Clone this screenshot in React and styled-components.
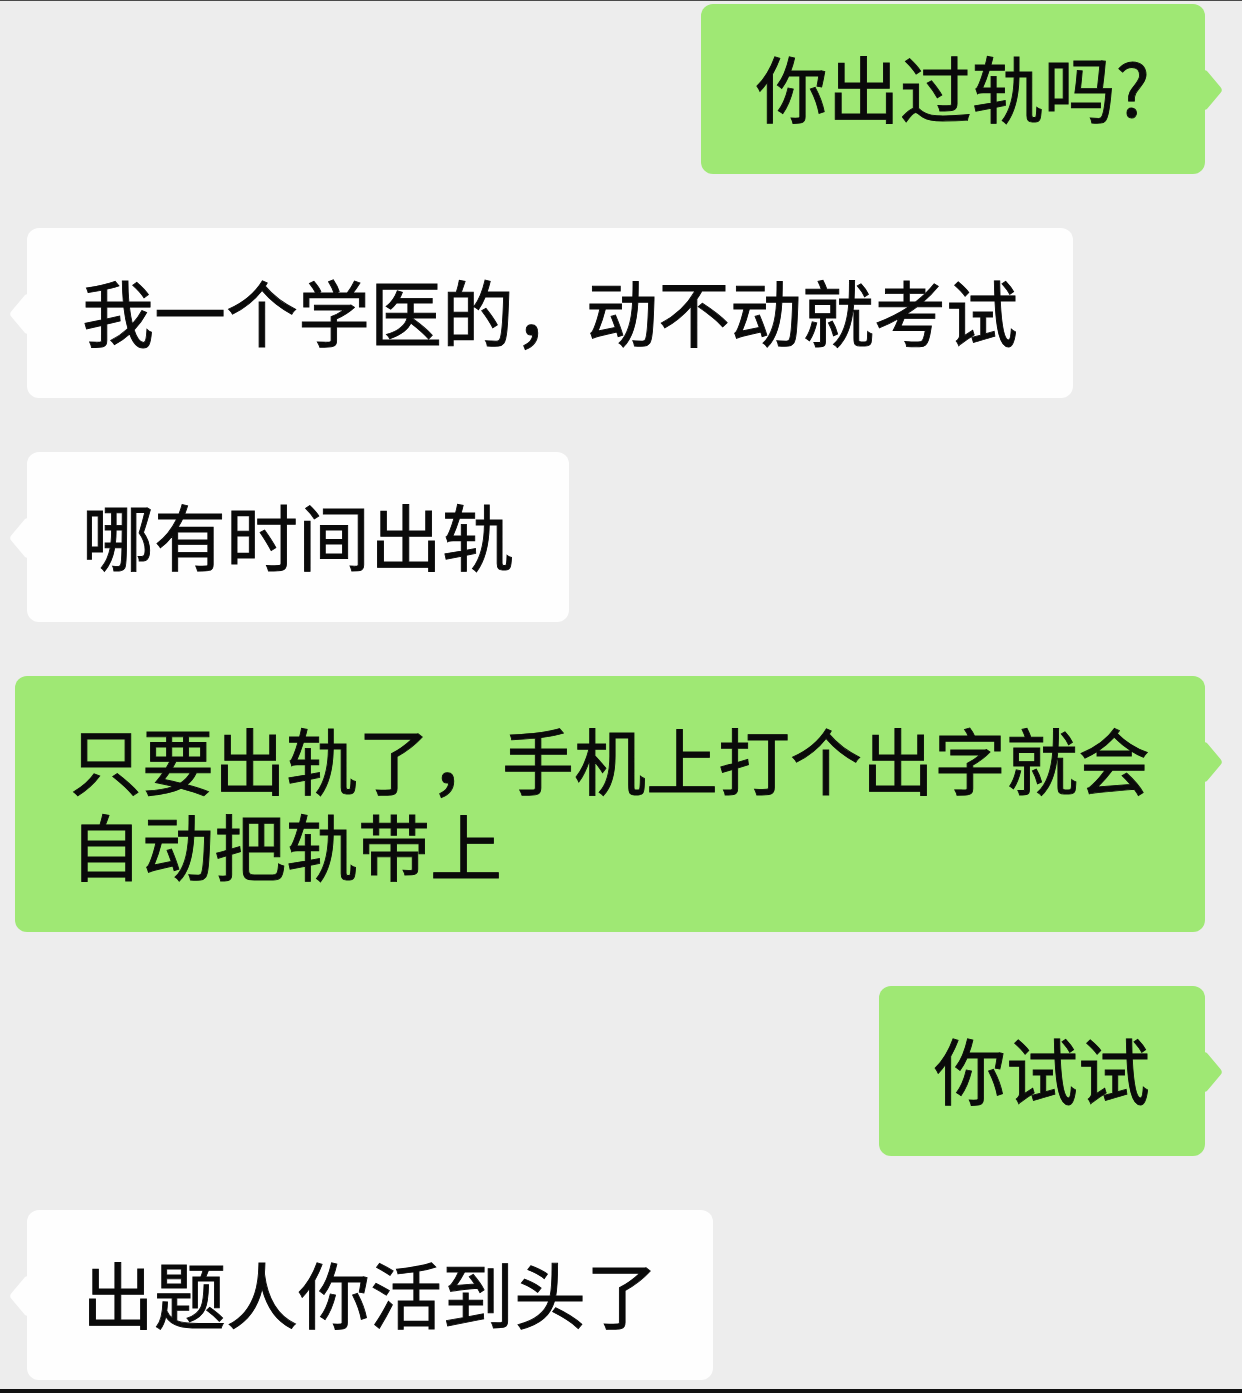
import React from 'react';
import styled, { createGlobalStyle } from 'styled-components';

const GlobalStyle = createGlobalStyle`
  html, body {
    margin: 0;
    padding: 0;
    background: #ededed;
  }
  * {
    box-sizing: border-box;
  }
`;

const Screen = styled.div`
  height: 100vh;
  overflow: hidden;
  background: #ededed;
  border-top: 1px solid #4a4a4a;
  border-bottom: 4px solid #111;
  font-family: "Noto Sans CJK SC", "Noto Sans", sans-serif;
`;

const Thread = styled.div`
  display: flex;
  flex-direction: column;
  gap: 54px;
  padding: 3px 37px 0 15px;
`;

const Row = styled.div`
  display: flex;
  justify-content: ${p => (p.$mine ? 'flex-end' : 'flex-start')};
`;

const Bubble = styled.div`
  position: relative;
  max-width: 1190px;
  margin-left: ${p => (p.$mine ? '0' : '12px')};
  padding: 39px 55px 45px;
  border-radius: 12px;
  background: ${p => (p.$mine ? '#9fe874' : '#fefefe')};
  color: #0a0a0a;
  font-size: 72px;
  line-height: 86px;
  font-weight: 400;
  -webkit-text-stroke: 0.9px #0a0a0a;

  &::after {
    content: '';
    position: absolute;
    top: 71px;
    ${p => (p.$mine ? 'right: -15px;' : 'left: -15px;')}
    width: 30px;
    height: 30px;
    border-radius: 4px;
    background: inherit;
    transform: scaleX(0.85) rotate(45deg);
  }
`;

const messages = [
  { mine: true, text: '你出过轨吗?' },
  { mine: false, text: '我一个学医的，动不动就考试' },
  { mine: false, text: '哪有时间出轨' },
  { mine: true, text: '只要出轨了，手机上打个出字就会自动把轨带上' },
  { mine: true, text: '你试试' },
  { mine: false, text: '出题人你活到头了' },
];

const App = () => (
  <>
    <GlobalStyle />
    <Screen>
      <Thread>
        {messages.map((m, i) => (
          <Row key={i} $mine={m.mine}>
            <Bubble $mine={m.mine}>{m.text}</Bubble>
          </Row>
        ))}
      </Thread>
    </Screen>
  </>
);

export default App;
